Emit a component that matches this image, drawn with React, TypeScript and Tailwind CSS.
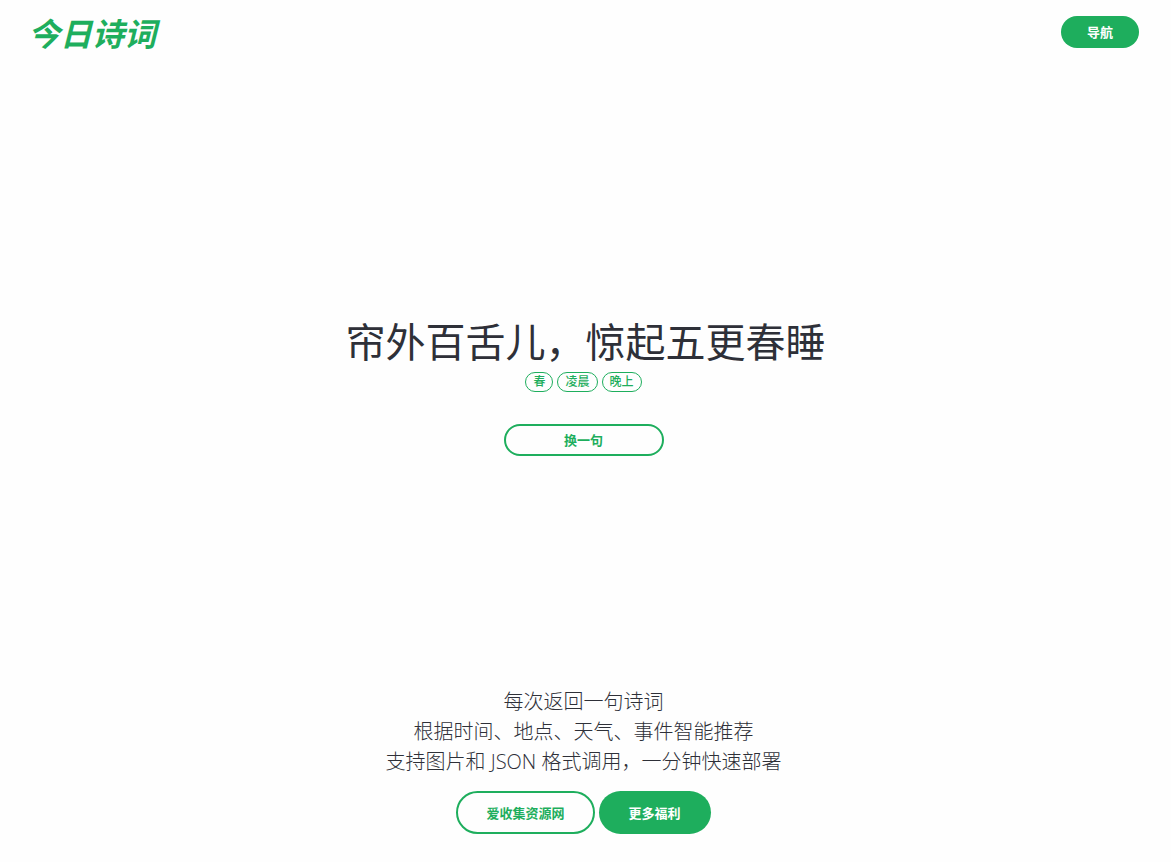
const tags = ['春', '凌晨', '晚上']

const intro = [
  '每次返回一句诗词',
  '根据时间、地点、天气、事件智能推荐',
  '支持图片和 JSON 格式调用，一分钟快速部署',
]

export default function App() {
  return (
    <div className="flex min-h-screen flex-col bg-[#fefefe] font-['Open_Sans','Noto_Sans_CJK_SC',sans-serif] text-[#2e3038]">
      <header className="flex h-16 items-center justify-between px-8">
        <a
          href="#"
          className="-ml-1 font-['Noto_Sans_CJK_SC',sans-serif] text-[32px] leading-10 font-bold text-[#1eae5d] italic"
        >
          今日诗词
        </a>
        <button
          type="button"
          className="h-8 rounded-full bg-[#1eae5d] px-[26px] text-[13px] leading-5 font-bold text-white"
        >
          导航
        </button>
      </header>

      <main className="flex flex-1 flex-col items-center justify-center pt-4 text-center">
        <h1 className="text-[40px] leading-[60px] font-normal">帘外百舌儿，惊起五更春睡</h1>
        <ul className="flex gap-1 pr-1">
          {tags.map((tag) => (
            <li
              key={tag}
              className="h-5 rounded-full border border-[#1eae5d] px-[7px] text-xs leading-[18px] font-medium text-[#1eae5d]"
            >
              {tag}
            </li>
          ))}
        </ul>
        <div className="mt-8 pr-1">
          <button
            type="button"
            className="h-8 w-40 rounded-full border-2 border-[#1eae5d] text-[13px] leading-5 font-bold text-[#1eae5d]"
          >
            换一句
          </button>
        </div>
      </main>

      <footer className="flex flex-col items-center pr-1 pb-7 text-center">
        <div className="text-xl leading-[30px] font-light">
          {intro.map((line) => (
            <p key={line}>{line}</p>
          ))}
        </div>
        <div className="mt-3.5 flex gap-1">
          <a
            href="#"
            className="flex h-[43px] items-center rounded-full border-2 border-[#1eae5d] px-7 text-[13px] leading-5 font-bold text-[#1eae5d]"
          >
            爱收集资源网
          </a>
          <a
            href="#"
            className="flex h-[43px] items-center rounded-full bg-[#1eae5d] px-[30px] text-[13px] leading-5 font-bold text-white"
          >
            更多福利
          </a>
        </div>
      </footer>
    </div>
  )
}
